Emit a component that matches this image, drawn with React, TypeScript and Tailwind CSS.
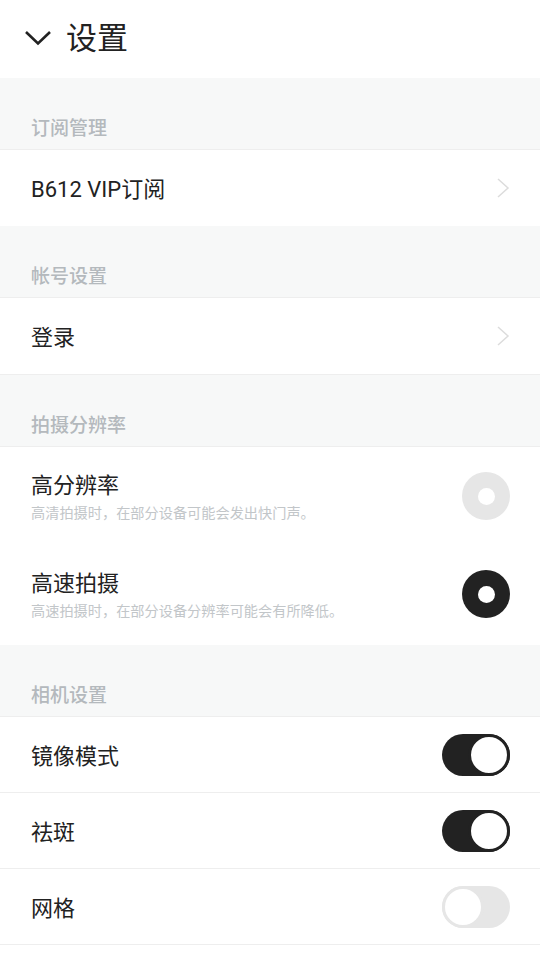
import React, { useState } from 'react'

const font = { fontFamily: 'Roboto, "Noto Sans CJK SC", "Noto Sans", sans-serif' }

const SectionHeader: React.FC<{ title: string }> = ({ title }) => (
  <div className="flex h-[72px] items-end border-b border-[#eeeeee] bg-[#f7f8f8] pb-[11px] pl-[31px]">
    <span className="text-[19px] font-medium leading-none text-[#b4b9bd]">{title}</span>
  </div>
)

const ChevronRight = () => (
  <svg width="14" height="22" viewBox="0 0 14 22" fill="none">
    <path d="M2 2 L12 11 L2 20" stroke="#dcdcdc" strokeWidth="1.5" />
  </svg>
)

const LinkRow: React.FC<{ label: string }> = ({ label }) => (
  <div className="flex h-[76px] items-center justify-between bg-white pl-[31px] pr-[30px]">
    <span className="pt-[3px] text-[22px] text-[#222222]">{label}</span>
    <ChevronRight />
  </div>
)

const Radio: React.FC<{ on: boolean }> = ({ on }) => (
  <div
    className={`flex h-[48px] w-[48px] items-center justify-center rounded-full ${
      on ? 'bg-[#222222]' : 'bg-[#e6e6e6]'
    }`}
  >
    <div className="h-[17px] w-[17px] rounded-full bg-white" />
  </div>
)

const Toggle: React.FC<{ on: boolean; onClick: () => void }> = ({ on, onClick }) => (
  <button
    onClick={onClick}
    className={`flex h-[42px] w-[68px] items-center rounded-full ${
      on ? 'justify-end bg-[#222222]' : 'justify-start bg-[#e6e6e6]'
    }`}
  >
    <span
      className={`h-[42px] w-[42px] rounded-full border-[3px] bg-white ${
        on ? 'border-[#222222]' : 'border-[#e6e6e6]'
      }`}
    />
  </button>
)

export default function App() {
  const [res, setRes] = useState<'hd' | 'fast'>('fast')
  const [toggles, setToggles] = useState({ mirror: true, skin: true, grid: false })

  const toggleRows: { key: keyof typeof toggles; label: string }[] = [
    { key: 'mirror', label: '镜像模式' },
    { key: 'skin', label: '祛斑' },
    { key: 'grid', label: '网格' },
  ]

  return (
    <div className="min-h-[960px] w-[540px] bg-white" style={font}>
      {/* header */}
      <div className="flex h-[78px] items-center gap-[14px] pl-[24px] pb-[2px]">
        <svg width="28" height="16" viewBox="0 0 28 16" fill="none">
          <path d="M2 2 L14 13.5 L26 2" stroke="#222222" strokeWidth="2.6" />
        </svg>
        <span className="text-[31px] leading-none text-[#222222]">设置</span>
      </div>

      <SectionHeader title="订阅管理" />
      <LinkRow label="B612 VIP订阅" />

      <SectionHeader title="帐号设置" />
      <div className="border-b border-[#eeeeee]">
        <LinkRow label="登录" />
      </div>

      <SectionHeader title="拍摄分辨率" />
      <div className="bg-white pb-[2px]">
        {[
          { key: 'hd' as const, title: '高分辨率', sub: '高清拍摄时，在部分设备可能会发出快门声。' },
          { key: 'fast' as const, title: '高速拍摄', sub: '高速拍摄时，在部分设备分辨率可能会有所降低。' },
        ].map((r) => (
          <div
            key={r.key}
            onClick={() => setRes(r.key)}
            className="flex h-[98px] items-center justify-between pl-[31px] pr-[30px]"
          >
            <div className="flex flex-col pt-[2px]">
              <span className="text-[22px] leading-[30px] text-[#222222]">{r.title}</span>
              <span className="mt-[2px] text-[14.2px] leading-[20px] text-[#c2c6c9]">{r.sub}</span>
            </div>
            <Radio on={res === r.key} />
          </div>
        ))}
      </div>

      <SectionHeader title="相机设置" />
      {toggleRows.map((t) => (
        <div
          key={t.key}
          className="flex h-[76px] items-center justify-between border-b border-[#eeeeee] bg-white pl-[31px] pr-[30px]"
        >
          <span className="pt-[3px] text-[22px] text-[#222222]">{t.label}</span>
          <Toggle
            on={toggles[t.key]}
            onClick={() => setToggles({ ...toggles, [t.key]: !toggles[t.key] })}
          />
        </div>
      ))}
    </div>
  )
}
